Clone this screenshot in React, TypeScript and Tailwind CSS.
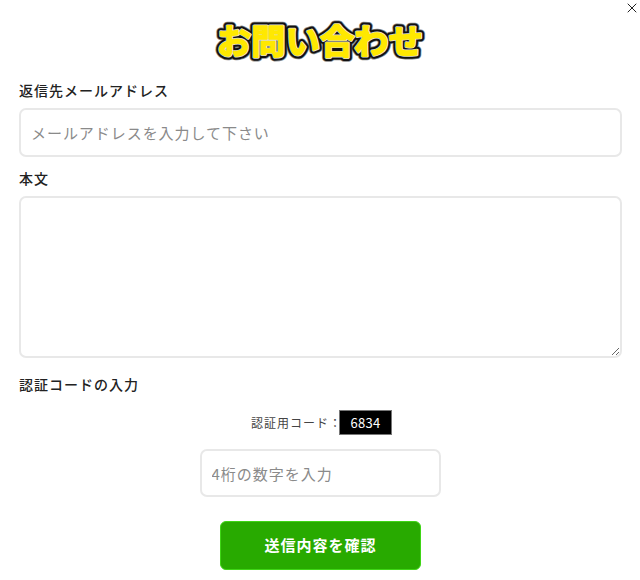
import { X } from 'lucide-react'

const jp = "font-['Noto_Sans_CJK_JP','Noto_Sans',sans-serif]"

function Logo() {
  const text = {
    x: 12,
    y: 41,
    fontSize: 34,
    fontWeight: 700,
    textLength: 206,
    lengthAdjust: 'spacingAndGlyphs' as const,
    strokeLinejoin: 'round' as const,
  }
  return (
    <svg width={230} height={56} viewBox="0 0 230 56" className="block">
      <text {...text} fill="#8a8a8a" stroke="#8a8a8a" strokeWidth={8.5}>お問い合わせ</text>
      <text {...text} fill="#111" stroke="#111" strokeWidth={7}>お問い合わせ</text>
      <text {...text} fill="#d8d8d8" stroke="#d8d8d8" strokeWidth={3}>お問い合わせ</text>
      <text {...text} fill="#ffe800" stroke="#ffe800" strokeWidth={1.6}>お問い合わせ</text>
    </svg>
  )
}

export default function App() {
  return (
    <div className={`relative w-[640px] h-[580px] overflow-hidden bg-white text-[#222] ${jp}`}>
      <button className="absolute top-0 right-0 text-[#222]">
        <X size={16} strokeWidth={1.5} />
      </button>

      <div className="flex flex-col px-[19px] pt-[13px]">
        <div className="flex justify-center"><Logo /></div>

        <label className="mt-[11px] text-[14px] leading-[20px] font-medium tracking-[1px]">返信先メールアドレス</label>
        <input
          placeholder="メールアドレスを入力して下さい"
          className="mt-[8px] w-[603px] h-[49px] pl-[10px] pr-[12px] text-[15px] tracking-[0.95px] bg-white border-2 border-[#e8e8e8] rounded-[7px] outline-none placeholder:text-[#8a8a8a]"
        />

        <label className="mt-[11px] text-[14px] leading-[20px] font-medium tracking-[1px]">本文</label>
        <textarea className="mt-[8px] w-[603px] h-[162px] block bg-white border-2 border-[#e8e8e8] rounded-[7px] outline-none" />

        <label className="mt-[16px] text-[14px] leading-[20px] font-medium tracking-[1px]">認証コードの入力</label>

        <div className="mt-[16px] flex items-center justify-center pl-[3px]">
          <span className="text-[12px] tracking-[1px] text-[#444]">認証用コード：</span>
          <span className="-ml-[3px] w-[53px] h-[25px] flex items-center justify-center bg-black border border-[#777] text-white text-[13px] tracking-[0.3px]">6834</span>
        </div>

        <div className="mt-[14px] flex justify-center">
          <input
            placeholder="4桁の数字を入力"
            className="w-[241px] h-[48px] pl-[10px] pr-[12px] text-[15px] tracking-[1px] bg-white border-2 border-[#e8e8e8] rounded-[7px] outline-none placeholder:text-[#8a8a8a]"
          />
        </div>

        <div className="mt-[24px] flex justify-center">
          <button className="w-[201px] h-[49px] pl-[1px] bg-[#28aa00] border border-[#3fd516] rounded-[6px] text-white text-[15px] font-bold tracking-[1px]">送信内容を確認</button>
        </div>
      </div>
    </div>
  )
}
